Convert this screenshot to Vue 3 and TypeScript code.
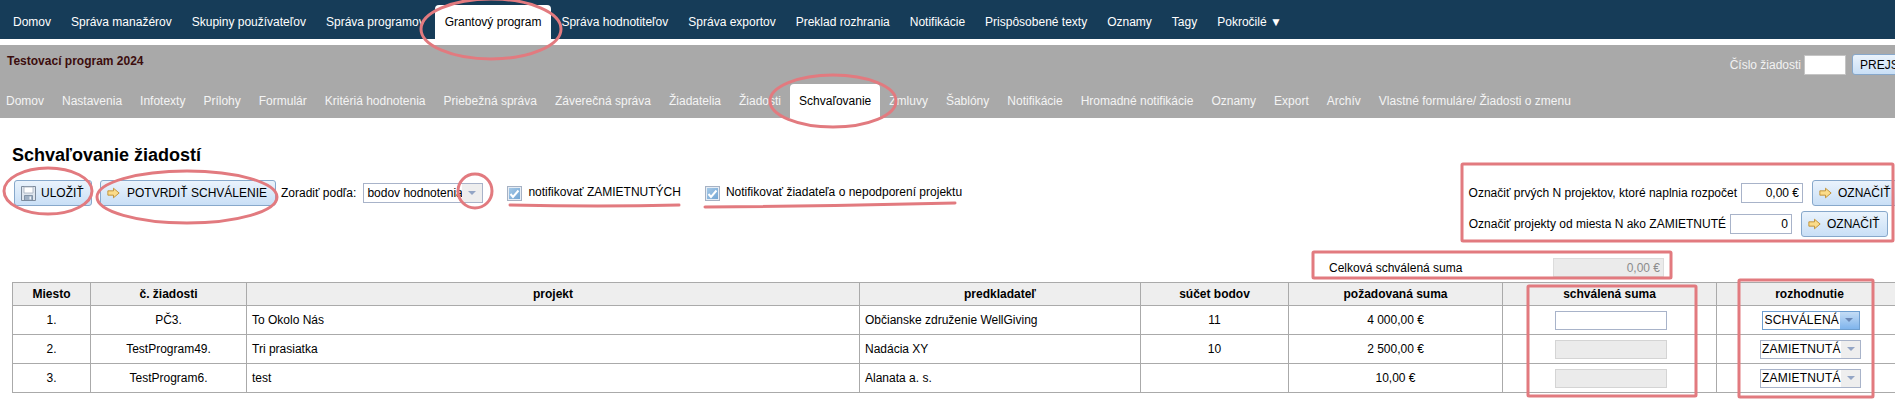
<script setup lang="ts">
interface Row {
  place: string
  code: string
  project: string
  applicant: string
  points: string
  amount: string
  decision: string
  active: boolean
}

const mainMenu = ['Domov', 'Správa manažérov', 'Skupiny používateľov', 'Správa programov', 'Grantový program', 'Správa hodnotiteľov', 'Správa exportov', 'Preklad rozhrania', 'Notifikácie', 'Prispôsobené texty', 'Oznamy', 'Tagy', 'Pokročilé ▼']
const subMenu = ['Domov', 'Nastavenia', 'Infotexty', 'Prílohy', 'Formulár', 'Kritériá hodnotenia', 'Priebežná správa', 'Záverečná správa', 'Žiadatelia', 'Žiadosti', 'Schvaľovanie', 'Zmluvy', 'Šablóny', 'Notifikácie', 'Hromadné notifikácie', 'Oznamy', 'Export', 'Archív', 'Vlastné formuláre/ Žiadosti o zmenu']
const headers = ['Miesto', 'č. žiadosti', 'projekt', 'predkladateľ', 'súčet bodov', 'požadovaná suma', 'schválená suma', 'rozhodnutie']
const widths = [78, 156, 613, 281, 148, 214, 214, 186]

const rows: Row[] = [
  { place: '1.', code: 'PČ3.', project: 'To Okolo Nás', applicant: 'Občianske združenie WellGiving', points: '11', amount: '4 000,00 €', decision: 'SCHVÁLENÁ', active: true },
  { place: '2.', code: 'TestProgram49.', project: 'Tri prasiatka', applicant: 'Nadácia XY', points: '10', amount: '2 500,00 €', decision: 'ZAMIETNUTÁ', active: false },
  { place: '3.', code: 'TestProgram6.', project: 'test', applicant: 'Alanata a. s.', points: '', amount: '10,00 €', decision: 'ZAMIETNUTÁ', active: false },
]

// red marks somebody drew over the screenshot
const ellipses = [
  { cx: 491, cy: 29, rx: 70, ry: 30 },
  { cx: 833, cy: 101, rx: 63, ry: 26 },
  { cx: 48, cy: 191, rx: 44, ry: 23 },
  { cx: 187, cy: 197, rx: 90, ry: 26 },
  { cx: 475, cy: 191, rx: 17, ry: 17 },
]
const boxes = [
  { x: 1462, y: 164, w: 431, h: 77 },
  { x: 1313, y: 252, w: 358, h: 26 },
  { x: 1528, y: 286, w: 168, h: 110 },
  { x: 1739, y: 280, w: 134, h: 117 },
]
const underlines = ['M510 205 Q600 207 679 205', 'M705 207 Q830 206 955 203']
</script>

<template>
  <div class="page">
    <nav class="main-nav">
      <a v-for="item in mainMenu" :key="item" :class="{ current: item === 'Grantový program' }">{{ item }}</a>
    </nav>

    <section class="program-bar">
      <div class="program-top">
        <strong class="program-name">Testovací program 2024</strong>
        <div class="jump">
          <span>Číslo žiadosti</span>
          <input class="jump-input" type="text" />
          <button class="btn jump-btn">PREJSŤ</button>
        </div>
      </div>
      <nav class="sub-nav">
        <a v-for="item in subMenu" :key="item" :class="{ current: item === 'Schvaľovanie' }">{{ item }}</a>
      </nav>
    </section>

    <main class="content">
      <h1>Schvaľovanie žiadostí</h1>

      <div class="toolbar">
        <div class="toolbar-left">
          <button class="btn save-btn">
            <svg width="15" height="16" viewBox="0 0 15 16">
              <path d="M.5 1.5h14v14H.5z" fill="#dfe6ee" stroke="#7d8b9c" />
              <path d="M3 2h9v6H3z" fill="#fff" stroke="#a4afbc" stroke-width=".8" />
              <path d="M3.5 10.5h8v5h-8z" fill="#9fb0c4" stroke="#74859a" stroke-width=".8" />
              <path d="M8.5 11.5H10v3H8.5z" fill="#eef2f6" />
            </svg>
            ULOŽIŤ
          </button>
          <button class="btn confirm-btn">
            <svg class="arrow" width="13" height="12" viewBox="0 0 15 13">
              <path d="M1 4h6.5V1l6.5 5.5L7.5 12V9H1z" fill="#fbdc8a" stroke="#bd8a2b" stroke-linejoin="round" />
            </svg>
            POTVRDIŤ SCHVÁLENIE
          </button>
          <span class="sort-label">Zoradiť podľa:</span>
          <div class="combo sort-combo">
            <span class="combo-value">bodov hodnotenia</span>
            <span class="combo-arrow"><i></i></span>
          </div>
          <label class="check first-check">
            <span class="check-box">
              <svg width="11" height="11" viewBox="0 0 11 11"><path d="M1.5 6l2.5 3L9.5 2.5" fill="none" stroke="#fff" stroke-width="2" /></svg>
            </span>
            notifikovať ZAMIETNUTÝCH
          </label>
          <label class="check second-check">
            <span class="check-box">
              <svg width="11" height="11" viewBox="0 0 11 11"><path d="M1.5 6l2.5 3L9.5 2.5" fill="none" stroke="#fff" stroke-width="2" /></svg>
            </span>
            Notifikovať žiadateľa o nepodporení projektu
          </label>
        </div>

        <div class="toolbar-right">
          <div class="mark-row budget-row">
            <span>Označiť prvých N projektov, ktoré naplnia rozpočet</span>
            <input class="mark-input" type="text" value="0,00 €" />
            <button class="btn mark-btn">
              <svg class="arrow" width="13" height="12" viewBox="0 0 15 13">
                <path d="M1 4h6.5V1l6.5 5.5L7.5 12V9H1z" fill="#fbdc8a" stroke="#bd8a2b" stroke-linejoin="round" />
              </svg>
              OZNAČIŤ
            </button>
          </div>
          <div class="mark-row">
            <span>Označiť projekty od miesta N ako ZAMIETNUTÉ</span>
            <input class="mark-input" type="text" value="0" />
            <button class="btn mark-btn">
              <svg class="arrow" width="13" height="12" viewBox="0 0 15 13">
                <path d="M1 4h6.5V1l6.5 5.5L7.5 12V9H1z" fill="#fbdc8a" stroke="#bd8a2b" stroke-linejoin="round" />
              </svg>
              OZNAČIŤ
            </button>
          </div>
        </div>
      </div>

      <div class="total-row">
        <span class="total-label">Celková schválená suma</span>
        <input class="total-input" type="text" value="0,00 €" disabled />
      </div>

      <table class="grid">
        <colgroup>
          <col v-for="(w, i) in widths" :key="i" :style="{ width: w + 'px' }" />
        </colgroup>
        <thead>
          <tr>
            <th v-for="h in headers" :key="h">{{ h }}</th>
          </tr>
        </thead>
        <tbody>
          <tr v-for="row in rows" :key="row.code">
            <td class="center">{{ row.place }}</td>
            <td class="center">{{ row.code }}</td>
            <td>{{ row.project }}</td>
            <td>{{ row.applicant }}</td>
            <td class="center">{{ row.points }}</td>
            <td class="center">{{ row.amount }}</td>
            <td class="center">
              <input class="amount-input" type="text" :disabled="!row.active" />
            </td>
            <td class="center">
              <div class="combo decision" :class="{ active: row.active }">
                <span class="combo-value">{{ row.decision }}</span>
                <span class="combo-arrow"><i></i></span>
              </div>
            </td>
          </tr>
        </tbody>
      </table>
    </main>

    <svg class="marks" width="1895" height="402" viewBox="0 0 1895 402">
      <ellipse v-for="(e, i) in ellipses" :key="'e' + i" :cx="e.cx" :cy="e.cy" :rx="e.rx" :ry="e.ry" />
      <rect v-for="(b, i) in boxes" :key="'b' + i" :x="b.x" :y="b.y" :width="b.w" :height="b.h" rx="1" />
      <path v-for="(d, i) in underlines" :key="'u' + i" :d="d" />
    </svg>
  </div>
</template>

<style scoped>
.page {
  position: relative;
  width: 1895px;
  height: 402px;
  overflow: hidden;
  font-family: "Liberation Sans", Arial, sans-serif;
  font-size: 12px;
  color: #000;
  background: #fff;
}

.btn {
  display: inline-flex;
  align-items: center;
  justify-content: center;
  box-sizing: border-box;
  height: 26px;
  border: 1px solid #87a8cb;
  border-radius: 3px;
  background: linear-gradient(#eaf3fc, #c9dff6);
  font: inherit;
  color: #000;
  white-space: nowrap;
}

.main-nav {
  display: flex;
  align-items: flex-end;
  height: 39px;
  padding-left: 3px;
  background: #163c58;
}

.main-nav a {
  padding: 0 10px;
  height: 34px;
  line-height: 34px;
  color: #fff;
  white-space: nowrap;
}

.main-nav a.current {
  height: 40px;
  margin-bottom: -6px;
  padding-bottom: 6px;
  box-sizing: border-box;
  background: #fff;
  color: #000;
  border-radius: 4px 4px 0 0;
}

.program-bar {
  margin-top: 6px;
  height: 73px;
  background: #a9a9a9;
  display: flex;
  flex-direction: column;
  justify-content: space-between;
}

.program-top {
  display: flex;
  justify-content: space-between;
  align-items: flex-start;
  padding: 9px 0 0 7px;
}

.program-name {
  color: #3c0d0d;
  line-height: 15px;
}

.jump {
  display: flex;
  align-items: center;
  color: #f2f2f2;
  margin-right: -24px;
}

.jump-input {
  width: 42px;
  height: 20px;
  box-sizing: border-box;
  margin: 0 6px 0 3px;
  border: 1px solid #c5c5c5;
  background: #fff;
}

.jump-btn {
  width: 67px;
  height: 21px;
  padding: 0 0 0 7px;
  justify-content: flex-start;
}

.sub-nav {
  display: flex;
  height: 34px;
  margin-left: -3px;
}

.sub-nav a {
  padding: 0 9px;
  line-height: 34px;
  color: #f4f4f4;
  white-space: nowrap;
}

.sub-nav a.current {
  background: #fff;
  color: #000;
  border-radius: 4px 4px 0 0;
}

.content {
  padding-left: 12px;
}

h1 {
  margin: 26px 0 14px;
  font-size: 18px;
  line-height: 22px;
  font-weight: bold;
}

.toolbar {
  display: flex;
  justify-content: space-between;
  height: 57px;
  padding-right: 7px;
}

.toolbar-left {
  display: flex;
  align-items: flex-start;
  padding-left: 2px;
}

.save-btn {
  width: 78px;
  justify-content: flex-start;
  gap: 5px;
  padding: 0 0 0 6px;
}

.confirm-btn {
  width: 176px;
  margin-left: 8px;
  justify-content: flex-start;
  gap: 7px;
  padding: 0 0 0 6px;
}

.sort-label {
  margin-left: 5px;
  line-height: 26px;
}

.combo {
  display: inline-flex;
  box-sizing: border-box;
  border: 1px solid #a8b3c9;
  background: #fff;
  text-align: left;
}

.combo-value {
  flex: 1;
  padding-left: 3px;
  line-height: 18px;
  white-space: nowrap;
  overflow: hidden;
}

.combo-arrow {
  display: flex;
  align-items: center;
  justify-content: center;
  width: 20px;
  background: #eeeeee;
}

.combo-arrow i {
  width: 0;
  height: 0;
  border-left: 4px solid transparent;
  border-right: 4px solid transparent;
  border-top: 4px solid #93a5c5;
}

.sort-combo {
  width: 120px;
  height: 20px;
  margin: 3px 0 0 7px;
}

.check {
  display: flex;
  align-items: center;
  gap: 6px;
  height: 26px;
  white-space: nowrap;
  margin-top: -1px;
}

.first-check {
  margin-left: 24px;
}

.second-check {
  margin-left: 24px;
}

.check-box {
  display: flex;
  align-items: center;
  justify-content: center;
  box-sizing: border-box;
  width: 15px;
  height: 15px;
  margin-top: 2px;
  border: 1px solid #a6b2c4;
  box-shadow: inset 0 0 0 1px #e6edf5;
  background: linear-gradient(135deg, #a9cbe8, #6fa3d2);
}

.toolbar-right {
  display: flex;
  flex-direction: column;
  align-items: flex-end;
  gap: 5px;
}

.mark-row {
  display: flex;
  align-items: center;
  height: 26px;
}

.budget-row {
  margin-right: -11px;
}

.mark-input {
  width: 62px;
  height: 20px;
  box-sizing: border-box;
  margin: 0 9px 0 4px;
  padding: 0 3px;
  border: 1px solid #a8b3c9;
  font: inherit;
  text-align: right;
}

.mark-btn {
  width: 87px;
  justify-content: flex-start;
  gap: 6px;
  padding: 0 0 0 6px;
}

.total-row {
  display: flex;
  align-items: center;
  height: 19px;
  margin-top: 21px;
  padding-left: 1317px;
}

.total-label {
  width: 224px;
}

.total-input {
  width: 111px;
  height: 19px;
  box-sizing: border-box;
  padding: 0 3px;
  border: 1px solid #dcdcdc;
  background: #ebebeb;
  font: inherit;
  color: #8c8c8c;
  text-align: right;
}

.grid {
  margin-top: 5px;
  width: 1890px;
  table-layout: fixed;
  border-collapse: collapse;
}

.grid th,
.grid td {
  border: 1px solid #aaaaaa;
  padding: 0 5px;
}

.grid th {
  height: 22px;
  background: #eeeeee;
  font-weight: bold;
  text-align: center;
}

.grid td {
  height: 28px;
}

.grid td.center {
  text-align: center;
}

.amount-input {
  display: block;
  width: 112px;
  height: 19px;
  box-sizing: border-box;
  margin: 0 auto;
  transform: translateX(1px);
  border: 1px solid #a8b3c9;
  background: #fff;
}

.amount-input:disabled {
  border-color: #d4d4d4;
  background: #ebebeb;
}

.decision {
  display: flex;
  width: 101px;
  height: 19px;
  margin: 0 auto;
  transform: translateX(1px);
}

.decision .combo-value {
  padding-left: 1px;
  line-height: 17px;
  letter-spacing: 0.2px;
}

.decision .combo-arrow {
  width: 19px;
  flex: none;
}

.decision.active {
  width: 98px;
  border-color: #6f9fd0;
}

.decision.active .combo-value {
  padding-left: 2px;
}

.decision.active .combo-arrow {
  background: linear-gradient(#c4dcf5, #7fb4ec);
}

.decision.active .combo-arrow i {
  border-top-color: #6b87b5;
}

.arrow {
  flex: none;
}

.marks {
  position: absolute;
  top: 0;
  left: 0;
  pointer-events: none;
  filter: blur(0.7px);
}

.marks ellipse,
.marks rect,
.marks path {
  fill: none;
  stroke: #e27a7f;
  stroke-width: 3;
  stroke-linecap: round;
}
</style>

<style>
html,
body {
  margin: 0;
  overflow: hidden;
  background: #fff;
}
</style>
